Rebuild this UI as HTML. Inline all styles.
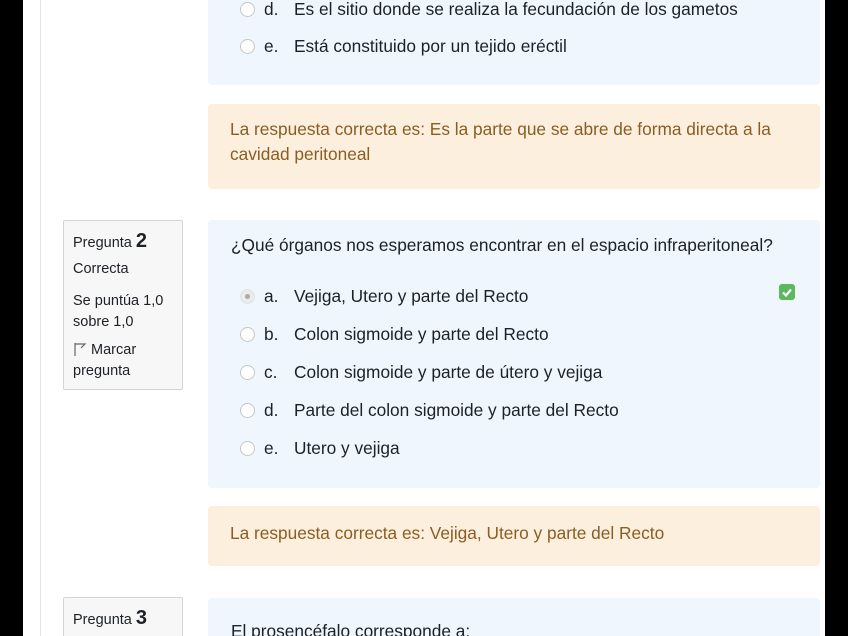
<!DOCTYPE html>
<html style="width:848px;height:636px;overflow:hidden"><head><meta charset="utf-8"><style>
*{margin:0;padding:0;box-sizing:border-box}
body{width:848px;height:636px;overflow:hidden;background:#000;font-family:"Liberation Sans",sans-serif;position:relative}
.page{position:absolute;left:23px;top:0;width:802px;height:636px;background:#fff}
.vline{position:absolute;left:40px;top:0;width:1px;height:636px;background:#e3e3e3}
.blue{position:absolute;left:208px;width:612px;background:#eff6fe;border-radius:4px}
.orange{position:absolute;left:208px;width:612px;background:#fcefdd;border-radius:4px;color:#8a5d22;font-size:17.3px;line-height:25px;padding:13px 22px}
.opt{position:absolute;left:240px;font-size:17.3px;color:#1d2125;white-space:nowrap}
.opt .r{position:absolute;left:0;top:3px;width:15px;height:15px;border:1px solid #c4c6c8;border-radius:50%;background:#fff}
.opt .l{position:absolute;left:24px}
.opt .t{position:absolute;left:54px}
.q{position:absolute;left:231px;font-size:17.3px;color:#1d2125;white-space:nowrap}
.info{position:absolute;left:63px;width:120px;background:#f7f7f8;border:1px solid #d5d5d7;border-radius:2px;font-size:14.5px;color:#1d2125;padding:0 9px}
.info div{position:absolute;left:9px;white-space:nowrap}
.info b{font-size:20px}
</style></head><body>
<div class="page"></div>
<div class="vline"></div>

<div class="blue" style="top:-10px;height:95px"></div>
<div class="opt" style="top:-1px"><span class="r"></span><span class="l">d.</span><span class="t">Es el sitio donde se realiza la fecundación de los gametos</span></div>
<div class="opt" style="top:36px"><span class="r"></span><span class="l">e.</span><span class="t">Está constituido por un tejido eréctil</span></div>

<div class="orange" style="top:104px;height:85px">La respuesta correcta es: Es la parte que se abre de forma directa a la cavidad peritoneal</div>

<div class="info" style="top:220px;height:170px">
<div style="top:9px">Pregunta <b>2</b></div>
<div style="top:40px">Correcta</div>
<div style="top:70px;line-height:21px">Se puntúa 1,0<br>sobre 1,0</div>
<div style="top:119px;line-height:21px"><svg width="14" height="14" viewBox="0 0 14 14" style="vertical-align:-2px"><path d="M2 1v13M2 2h10l-4 4" fill="none" stroke="#666" stroke-width="1.2"/></svg> Marcar<br>pregunta</div>
</div>

<div class="blue" style="top:220px;height:268px"></div>
<div class="q" style="top:235px">¿Qué órganos nos esperamos encontrar en el espacio infraperitoneal?</div>
<div class="opt" style="top:286px"><span class="r" style="background:#e9ebed;border-color:#e0e2e4"><span style="position:absolute;left:4px;top:4px;width:5px;height:5px;border-radius:50%;background:#a8abae"></span></span><span class="l">a.</span><span class="t">Vejiga, Utero y parte del Recto</span></div>
<div style="position:absolute;left:779px;top:284px;width:16px;height:16px;background:#5cb85c;border-radius:3px"><svg width="16" height="16" viewBox="0 0 16 16"><path d="M4 8.5l3 3 5-6" fill="none" stroke="#fff" stroke-width="2.2"/></svg></div>
<div class="opt" style="top:324px"><span class="r"></span><span class="l">b.</span><span class="t">Colon sigmoide y parte del Recto</span></div>
<div class="opt" style="top:362px"><span class="r"></span><span class="l">c.</span><span class="t">Colon sigmoide y parte de útero y vejiga</span></div>
<div class="opt" style="top:400px"><span class="r"></span><span class="l">d.</span><span class="t">Parte del colon sigmoide y parte del Recto</span></div>
<div class="opt" style="top:438px"><span class="r"></span><span class="l">e.</span><span class="t">Utero y vejiga</span></div>

<div class="orange" style="top:506px;height:60px;padding-top:15px">La respuesta correcta es: Vejiga, Utero y parte del Recto</div>

<div class="info" style="top:597px;height:60px">
<div style="top:9px">Pregunta <b>3</b></div>
</div>
<div class="blue" style="top:598px;height:60px"></div>
<div class="q" style="top:621px">El prosencéfalo corresponde a:</div>
</body></html>
